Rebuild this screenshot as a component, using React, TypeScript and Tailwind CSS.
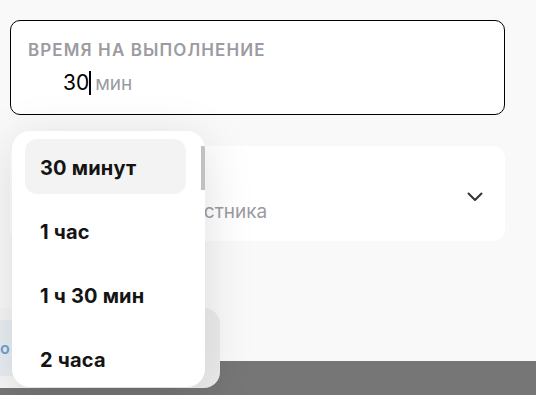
import React from 'react'

const options = ['30 минут', '1 час', '1 ч 30 мин', '2 часа']

export default function App() {
  const selected = 0
  return (
    <div
      className="relative w-[536px] h-[395px] overflow-hidden bg-[#f9f9f9] flex flex-col"
      style={{ fontFamily: 'Inter, "Noto Sans", sans-serif' }}
    >
      {/* время на выполнение */}
      <div className="mt-[20px] ml-[10px] w-[495px] h-[95px] bg-white border border-black rounded-[10px] pl-[17px] pt-[20px]">
        <div className="text-[17px] font-semibold text-[#9b9ba1] tracking-[1.1px] leading-[18px]">
          ВРЕМЯ НА ВЫПОЛНЕНИЕ
        </div>
        <div className="flex items-end mt-[9px] pl-[35px] h-[28px]">
          <span className="text-[21px] text-black leading-[26px]">30</span>
          <span className="w-[2px] h-[24px] bg-black mb-[1px]" />
          <span className="text-[19px] text-[#9b9ba1] leading-[24px] ml-[4px]">мин</span>
        </div>
      </div>

      {/* участник */}
      <div className="mt-[31px] ml-[10px] w-[495px] h-[95px] bg-white rounded-[12px] flex items-center justify-between pl-[18px] pr-[22px]">
        <div className="pt-[36px]">
          <div className="text-[19px] text-[#9b9ba1] leading-[24px] ml-[47px]">Выберите участника</div>
        </div>
        <svg width="16" height="10" viewBox="0 0 16 10" fill="none" className="mt-[6px]">
          <path d="M1.5 1.5L8 8L14.5 1.5" stroke="#333" strokeWidth="2" strokeLinecap="round" strokeLinejoin="round" />
        </svg>
      </div>

      <div className="flex-1" />
      <div className="h-[34px] bg-[#767676]" />

      {/* карточка снизу */}
      <div className="absolute left-[-16px] top-[308px] w-[236px] h-[80px] rounded-r-[16px] bg-gradient-to-r from-[#f7f7f7] to-[#ececec] flex items-center">
        <div className="ml-[16px] w-[13px] h-[56px] bg-[#e8eef3] flex items-center overflow-hidden">
          <span className="text-[16px] font-semibold text-[#6fa3d0] leading-[20px]">о</span>
        </div>
      </div>

      {/* выпадающий список */}
      <div className="absolute left-[12px] top-[131px] w-[193px] h-[256px] bg-white rounded-[18px] shadow-[0_10px_50px_rgba(0,0,0,0.13)] overflow-hidden">
        <div className="flex flex-col pt-[8px] pl-[13px] pr-[19px]">
          {options.map((o, i) => (
            <div
              key={o}
              className={`h-[55px] mb-[9px] flex items-center pl-[15px] pt-[2px] rounded-[12px] text-[20px] font-bold text-[#141414] tracking-[0.2px] ${
                i === selected ? 'bg-[#f3f3f3]' : ''
              }`}
            >
              {o}
            </div>
          ))}
        </div>
        <div className="absolute right-0 top-[15px] w-[4px] h-[44px] bg-[#c1c1c1]" />
      </div>
    </div>
  )
}
